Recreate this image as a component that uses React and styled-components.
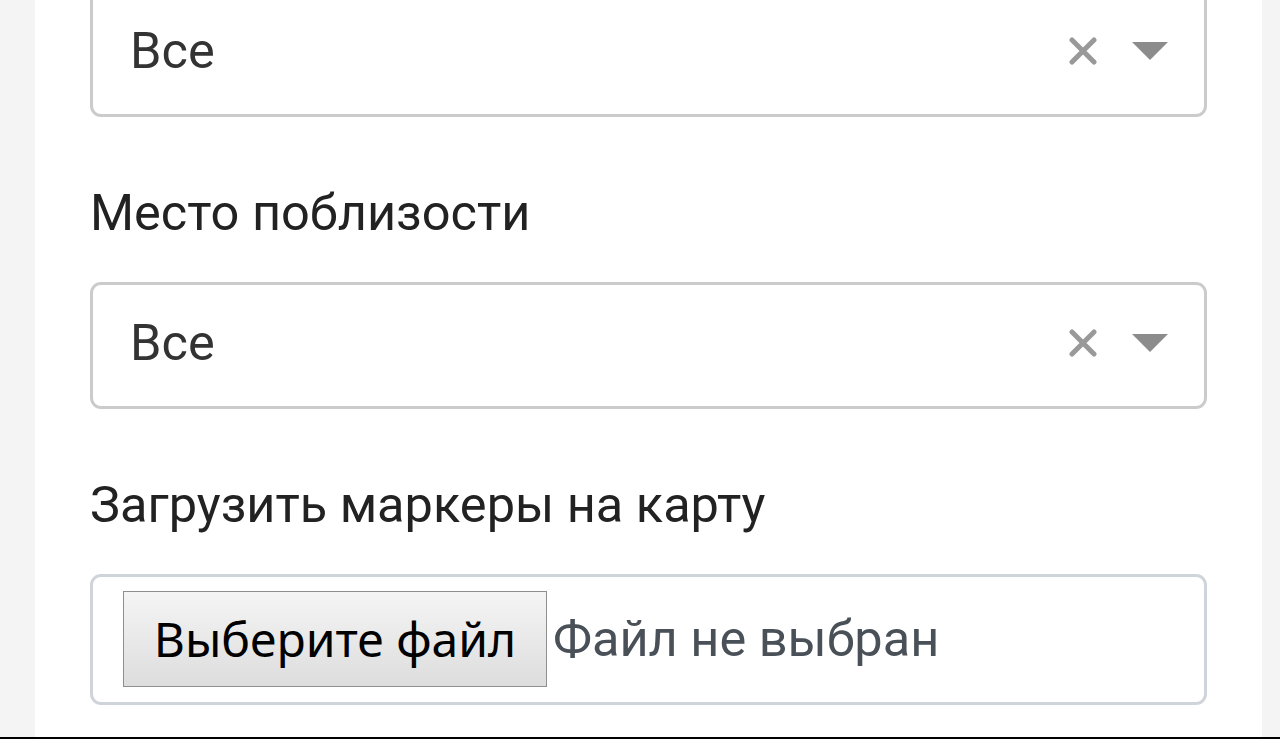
import React from 'react';
import styled, { createGlobalStyle } from 'styled-components';

const GlobalStyle = createGlobalStyle`
  html, body {
    margin: 0;
    padding: 0;
    background: #f4f4f4;
  }
  * {
    box-sizing: border-box;
  }
`;

const Page = styled.div`
  height: 739px;
  display: flex;
  flex-direction: column;
  overflow: hidden;
`;

const Main = styled.div`
  flex: 1;
  display: flex;
  min-height: 0;
`;

const Gutter = styled.div`
  width: ${p => p.width}px;
  background: #f4f4f4;
`;

const Panel = styled.div`
  flex: 1;
  background: #fff;
  padding: 0 55px;
  overflow: hidden;
`;

const Form = styled.form`
  margin-top: -10px;
  display: flex;
  flex-direction: column;
`;

const BottomRule = styled.div`
  height: 2px;
  background: #000;
`;

const Label = styled.label`
  display: block;
  margin: 60px 0 33px;
  font-family: Roboto, "Liberation Sans", sans-serif;
  font-size: 50.5px;
  line-height: 72px;
  color: #222;
`;

const SelectBox = styled.div`
  height: 127px;
  border: 3px solid #cbcbcb;
  border-radius: 11px;
  display: flex;
  align-items: center;
  padding: 0 36px 6px 37px;
  font-family: Roboto, "Liberation Sans", sans-serif;
  font-size: 50.5px;
  color: #333;
`;

const Value = styled.span`
  flex: 1;
`;

const Icons = styled.div`
  display: flex;
  align-items: center;
  gap: 35px;
`;

const FileBox = styled.div`
  height: 131px;
  border: 3px solid #ced4da;
  border-radius: 11px;
  display: flex;
  align-items: center;
  padding: 0 30px 2px;
`;

const FileButton = styled.button`
  height: 96px;
  width: 424px;
  border: 1px solid #8f8f8f;
  border-radius: 0;
  background: linear-gradient(#f5f5f5, #dddddd);
  font-family: "Noto Sans", "DejaVu Sans", sans-serif;
  font-size: 48px;
  color: #000;
  padding: 0;
`;

const FileStatus = styled.span`
  margin-left: 6px;
  font-family: Roboto, "Liberation Sans", sans-serif;
  font-size: 50.5px;
  color: #495057;
`;

const ClearIcon = () => (
  <svg width="28" height="28" viewBox="0 0 28 28">
    <path d="M3 3 L25 25 M25 3 L3 25" stroke="#999" strokeWidth="5" strokeLinecap="round" />
  </svg>
);

const Caret = () => (
  <svg width="36" height="18" viewBox="0 0 36 18">
    <path d="M0 0 H36 L18 18 Z" fill="#8c8c8c" />
  </svg>
);

const Select = ({ value }) => (
  <SelectBox>
    <Value>{value}</Value>
    <Icons>
      <ClearIcon />
      <Caret />
    </Icons>
  </SelectBox>
);

export default function App() {
  return (
    <Page>
      <GlobalStyle />
      <Main>
        <Gutter width={35} />
        <Panel>
          <Form>
            <Select value="Все" />
            <Label>Место поблизости</Label>
            <Select value="Все" />
            <Label>Загрузить маркеры на карту</Label>
            <FileBox>
              <FileButton type="button">Выберите файл</FileButton>
              <FileStatus>Файл не выбран</FileStatus>
            </FileBox>
          </Form>
        </Panel>
        <Gutter width={18} />
      </Main>
      <BottomRule />
    </Page>
  );
}
